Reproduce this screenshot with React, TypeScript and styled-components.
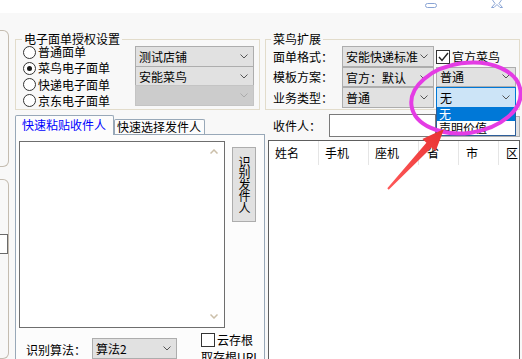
import React from 'react';
import styled, { createGlobalStyle } from 'styled-components';

const GlobalStyle = createGlobalStyle`
  html, body { margin: 0; padding: 0; background: #fff; }
  body {
    font-family: "Noto Sans CJK SC", "Liberation Sans", sans-serif;
    font-size: 12px;
    color: #000;
  }
  * { box-sizing: border-box; }
`;

const Window = styled.div`
  position: relative;
  width: 522px;
  height: 359px;
  overflow: hidden;
  background: #f8f8f8;
`;

const TitleStrip = styled.div`
  height: 13px;
  background: #fff;
  display: flex;
  justify-content: flex-end;
  gap: 54px;
  padding-right: 19px;
`;

const Body = styled.div`
  display: flex;
  height: 346px;
`;

const LeftRail = styled.div`
  width: 9px;
  display: flex;
  flex-direction: column;
  padding-top: 17px;
  gap: 12px;
`;

const RailPanel = styled.div<{ $grow?: boolean }>`
  height: ${(p) => (p.$grow ? 'auto' : '137px')};
  flex: ${(p) => (p.$grow ? '1' : 'none')};
  border: 1px solid #c4bcb0;
  border-left: none;
  border-radius: 0 6px 6px 0;
  padding-top: 54px;
`;

const RailInput = styled.div`
  width: 8px;
  height: 20px;
  border: 1px solid #6a6a6a;
  border-left: none;
  background: #fff;
`;

const Main = styled.div`
  margin-left: 6px;
  flex: 1;
  display: flex;
  flex-direction: column;
`;

const TopRow = styled.div`
  display: flex;
  gap: 5px;
  margin-top: 19px;
  height: 78px;
`;

const GroupBox = styled.fieldset<{ $w: number; $pl: number }>`
  margin: 0;
  width: ${(p) => p.$w}px;
  min-width: 0;
  padding: 0 4px 1px ${(p) => p.$pl}px;
  border: 1px solid #e2dccb;
`;

const Legend = styled.legend`
  padding: 0 2px;
  font-size: 12px;
  line-height: 14px;
`;

const AuthContent = styled.div`
  display: flex;
`;

const RadioList = styled.div`
  width: 113px;
  height: 63px;
  margin-top: -1px;
  padding-left: 1px;
  display: flex;
  flex-direction: column;
  justify-content: space-between;
`;

const OptionRow = styled.label`
  display: flex;
  align-items: center;
  gap: 2px;
  height: 14px;
  line-height: 14px;
  white-space: nowrap;
`;

const RadioDot = styled.span<{ $on?: boolean }>`
  width: 13px;
  height: 13px;
  border-radius: 50%;
  border: 1px solid #333;
  background: #fff;
  display: flex;
  align-items: center;
  justify-content: center;
  &::after {
    content: '';
    width: 5px;
    height: 5px;
    border-radius: 50%;
    background: ${(p) => (p.$on ? '#1a1a1a' : 'transparent')};
  }
`;

const CheckBox = styled.span`
  width: 14px;
  height: 14px;
  border: 1px solid #333;
  background: #fff;
  display: flex;
  align-items: center;
  justify-content: center;
`;

const ComboStack = styled.div`
  width: 119px;
  display: flex;
  flex-direction: column;
`;

const ComboBox = styled.div<{ $state?: 'disabled' | 'focused'; $h?: number }>`
  position: relative;
  height: ${(p) => p.$h ?? 21}px;
  display: flex;
  align-items: center;
  justify-content: space-between;
  padding: 0 5px 0 3px;
  border: 1px solid ${(p) => (p.$state === 'focused' ? '#0078d7' : p.$state === 'disabled' ? '#c4c4c4' : '#adadad')};
  background: ${(p) => (p.$state === 'focused' ? '#cce4f7' : p.$state === 'disabled' ? '#cccccc' : '#e1e1e1')};
  line-height: 17px;
  white-space: nowrap;
  & + & { margin-top: -1px; }
`;

const ComboText = styled.span`
  overflow: hidden;
  flex: 1;
  height: 17px;
`;

const ExpandGrid = styled.div`
  display: grid;
  grid-template-columns: 69px 92px 80px;
  grid-template-rows: 21px 20px 21px;
  column-gap: 2px;
  align-items: center;
`;

const FieldLabel = styled.span<{ $pl?: number; $w?: number }>`
  padding-left: ${(p) => p.$pl ?? 2}px;
  width: ${(p) => (p.$w ? `${p.$w}px` : 'auto')};
  line-height: 14px;
  white-space: nowrap;
`;

const GridCombo = styled(ComboBox)`
  height: 100%;
`;

const DropList = styled.div`
  position: absolute;
  left: -1px;
  right: -1px;
  top: 100%;
  z-index: 5;
  background: #fff;
  border: 1px solid #2d5e9a;
  border-top: none;
`;

const DropItem = styled.div<{ $active?: boolean }>`
  height: 14px;
  line-height: 14px;
  padding-left: 2px;
  background: ${(p) => (p.$active ? '#0078d7' : '#fff')};
  color: ${(p) => (p.$active ? '#fff' : '#000')};
`;

const LowerRow = styled.div`
  display: flex;
  flex: 1;
  gap: 3px;
`;

const TabArea = styled.div`
  width: 250px;
  margin-top: 5px;
  display: flex;
  flex-direction: column;
`;

const TabStrip = styled.div`
  display: flex;
  align-items: flex-end;
  height: 19px;
`;

const Tab = styled.div<{ $active?: boolean; $w: number; $pl: number }>`
  width: ${(p) => p.$w}px;
  height: ${(p) => (p.$active ? 20 : 15)}px;
  padding-left: ${(p) => p.$pl}px;
  margin-bottom: ${(p) => (p.$active ? -1 : 0)}px;
  position: relative;
  z-index: ${(p) => (p.$active ? 2 : 1)};
  border: 1px solid #98a8b8;
  border-bottom: none;
  border-radius: 2px 2px 0 0;
  background: #fcfcfc;
  color: ${(p) => (p.$active ? '#0000ff' : '#000')};
  line-height: ${(p) => (p.$active ? 17 : 14)}px;
  white-space: nowrap;
`;

const TabPanel = styled.div`
  flex: 1;
  border: 1px solid #98a8b8;
  border-bottom: none;
  background: #fcfcfc;
  padding: 6px 0 0 3px;
`;

const PasteRow = styled.div`
  display: flex;
  gap: 7px;
`;

const TextBox = styled.div`
  width: 206px;
  height: 187px;
  border: 1px solid #6e6e6e;
  background: #fff;
  display: flex;
  flex-direction: column;
  justify-content: space-between;
  align-items: flex-end;
  padding: 7px 6px 8px 0;
`;

const VerticalButton = styled.div`
  margin-top: 6px;
  width: 24px;
  height: 75px;
  border: 1px solid #adadad;
  background: #e1e1e1;
  writing-mode: vertical-rl;
  text-orientation: upright;
  display: flex;
  align-items: center;
  justify-content: center;
  line-height: 22px;
  letter-spacing: -0.5px;
`;

const AlgoRow = styled.div`
  display: flex;
  align-items: flex-start;
  margin-top: 5px;
`;

const AlgoLabel = styled.span`
  margin: 10px 0 0 7px;
  width: 66px;
  line-height: 14px;
`;

const AlgoCombo = styled.div`
  width: 85px;
  margin-top: 5px;
`;

const CloudCol = styled.div`
  margin-left: 24px;
  display: flex;
  flex-direction: column;
  gap: 3px;
  line-height: 14px;
`;

const ReceiverArea = styled.div`
  flex: 1;
  margin-top: 4px;
  margin-right: 2px;
  display: flex;
  flex-direction: column;
`;

const ReceiverRow = styled.div`
  display: flex;
  align-items: center;
  height: 23px;
`;

const ReceiverInput = styled.div`
  width: 107px;
  height: 23px;
  border: 1px solid #7a7a7a;
  background: #fff;
`;

const SideButton = styled.div`
  flex: 1;
  height: 21px;
  margin-top: 2px;
  border: 1px solid #adadad;
  background: #e1e1e1;
`;

const ListView = styled.div`
  flex: 1;
  margin-top: 3px;
  border: 1px solid #5e5e5e;
  border-bottom: none;
  background: #fff;
`;

const ListHeader = styled.div`
  display: grid;
  grid-template-columns: 50px 50px 50px 40px 40px 1fr;
  height: 24px;
`;

const HeaderCell = styled.div<{ $pl: number }>`
  padding-left: ${(p) => p.$pl}px;
  border-right: 1px solid #e5e5e5;
  line-height: 24px;
  white-space: nowrap;
  &:last-child { border-right: none; }
`;

const Overlay = styled.svg`
  position: absolute;
  left: 0;
  top: 0;
  pointer-events: none;
  z-index: 10;
`;

const Chevron = ({ color = '#555' }: { color?: string }) => (
  <svg width="8" height="5" viewBox="0 0 8 5">
    <path d="M0.5 0.5 L4 4 L7.5 0.5" fill="none" stroke={color} strokeWidth="1" />
  </svg>
);

const Combo = ({ text, state, h }: { text?: string; state?: 'disabled' | 'focused'; h?: number }) => (
  <ComboBox $state={state} $h={h}>
    <ComboText>{text}</ComboText>
    <Chevron color={state === 'disabled' ? '#aaa' : '#555'} />
  </ComboBox>
);

const Tick = () => (
  <svg width="11" height="10" viewBox="0 0 11 10">
    <path d="M1 5 L4 8.5 L10 1" fill="none" stroke="#222" strokeWidth="1.4" />
  </svg>
);

const headers = [
  { t: '姓名', pl: 6 },
  { t: '手机', pl: 6 },
  { t: '座机', pl: 6 },
  { t: '省', pl: 8 },
  { t: '市', pl: 7 },
  { t: '区', pl: 7 },
];

const radios = ['普通面单', '菜鸟电子面单', '快递电子面单', '京东电子面单'];

export default function App() {
  return (
    <Window>
      <GlobalStyle />
      <TitleStrip>
        <svg width="12" height="13" viewBox="0 0 12 13">
          <rect x="0.5" y="3.5" width="11" height="4" rx="2" fill="none" stroke="#8aa4d4" />
        </svg>
        <svg width="12" height="13" viewBox="0 0 12 13">
          <path d="M0.5 7.5 L4 3.5 L1.5 0 M11.5 7.5 L8 3.5 L10.5 0 M0.5 7.5 L3 7.5 L6 4.5 L9 7.5 L11.5 7.5" fill="none" stroke="#8aa4d4" />
        </svg>
      </TitleStrip>
      <Body>
        <LeftRail>
          <RailPanel />
          <RailPanel $grow>
            <RailInput />
          </RailPanel>
        </LeftRail>
        <Main>
          <TopRow>
            <GroupBox $w={245} $pl={6}>
              <Legend>电子面单授权设置</Legend>
              <AuthContent>
                <RadioList>
                  {radios.map((r, i) => (
                    <OptionRow key={r}>
                      <RadioDot $on={i === 1} />
                      {r}
                    </OptionRow>
                  ))}
                </RadioList>
                <ComboStack>
                  <Combo text="测试店铺" />
                  <Combo text="安能菜鸟" h={20} />
                  <Combo state="disabled" />
                </ComboStack>
              </AuthContent>
            </GroupBox>
            <GroupBox $w={255} $pl={5}>
              <Legend>菜鸟扩展</Legend>
              <ExpandGrid>
                <FieldLabel>面单格式：</FieldLabel>
                <GridCombo>
                  <ComboText>安能快递标准</ComboText>
                  <Chevron />
                </GridCombo>
                <OptionRow>
                  <CheckBox>
                    <Tick />
                  </CheckBox>
                  官方菜鸟
                </OptionRow>
                <FieldLabel>模板方案：</FieldLabel>
                <GridCombo>
                  <ComboText>官方：默认</ComboText>
                  <Chevron />
                </GridCombo>
                <GridCombo>
                  <ComboText>普通</ComboText>
                  <Chevron />
                </GridCombo>
                <FieldLabel>业务类型：</FieldLabel>
                <GridCombo>
                  <ComboText>普通</ComboText>
                  <Chevron />
                </GridCombo>
                <GridCombo $state="focused">
                  <ComboText>无</ComboText>
                  <Chevron />
                  <DropList>
                    <DropItem $active>无</DropItem>
                    <DropItem>声明价值</DropItem>
                  </DropList>
                </GridCombo>
              </ExpandGrid>
            </GroupBox>
          </TopRow>
          <LowerRow>
            <TabArea>
              <TabStrip>
                <Tab $active $w={99} $pl={6}>快速粘贴收件人</Tab>
                <Tab $w={91} $pl={2}>快速选择发件人</Tab>
              </TabStrip>
              <TabPanel>
                <PasteRow>
                  <TextBox>
                    <svg width="8" height="5" viewBox="0 0 8 5">
                      <path d="M0.5 4.5 L4 1 L7.5 4.5" fill="none" stroke="#cbbfa9" strokeWidth="1.5" />
                    </svg>
                    <svg width="8" height="5" viewBox="0 0 8 5">
                      <path d="M0.5 0.5 L4 4 L7.5 0.5" fill="none" stroke="#cbbfa9" strokeWidth="1.5" />
                    </svg>
                  </TextBox>
                  <VerticalButton>识别发件人</VerticalButton>
                </PasteRow>
                <AlgoRow>
                  <AlgoLabel>识别算法：</AlgoLabel>
                  <AlgoCombo>
                    <Combo text="算法2" />
                  </AlgoCombo>
                  <CloudCol>
                    <OptionRow>
                      <CheckBox />
                      云存根
                    </OptionRow>
                    <span>取存根URL</span>
                  </CloudCol>
                </AlgoRow>
              </TabPanel>
            </TabArea>
            <ReceiverArea>
              <ReceiverRow>
                <FieldLabel $pl={5} $w={61}>收件人：</FieldLabel>
                <ReceiverInput />
                <SideButton />
              </ReceiverRow>
              <ListView>
                <ListHeader>
                  {headers.map((h) => (
                    <HeaderCell key={h.t} $pl={h.pl}>
                      {h.t}
                    </HeaderCell>
                  ))}
                </ListHeader>
              </ListView>
            </ReceiverArea>
          </LowerRow>
        </Main>
      </Body>
      <Overlay width="522" height="359" viewBox="0 0 522 359">
        <defs>
          <linearGradient id="arrowFill" x1="0" y1="1" x2="1" y2="0">
            <stop offset="0" stopColor="#ff5a5a" />
            <stop offset="1" stopColor="#e83232" />
          </linearGradient>
        </defs>
        <ellipse
          cx="466"
          cy="98"
          rx="55"
          ry="35"
          transform="rotate(-8 466 98)"
          fill="none"
          stroke="#e43ce4"
          strokeWidth="4"
        />
        <polygon
          points="444,129 435.6,151.2 431.6,147.5 388.7,189.7 387.3,188.3 426.4,142.7 422.4,139"
          fill="url(#arrowFill)"
        />
      </Overlay>
    </Window>
  );
}
